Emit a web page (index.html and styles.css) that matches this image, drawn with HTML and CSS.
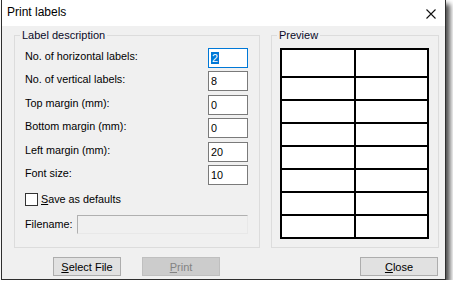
FILE: index.html
```html
<!DOCTYPE html>
<html lang="en">
<head>
    <meta charset="UTF-8">
    <title>Print labels</title>
    <link rel="stylesheet" href="styles.css">
</head>
<body>
    <div class="window">
        <div class="titlebar">
            <span class="title">Print labels</span>
            <svg class="close-x" width="10" height="10" viewBox="0 0 10 10">
                <path d="M0.5 0.5 L9.5 9.5 M9.5 0.5 L0.5 9.5" stroke="#111" stroke-width="1.1" fill="none"/>
            </svg>
        </div>

        <div class="content">
            <div class="groups">
                <fieldset class="group group-desc">
                    <legend>Label description</legend>
                    <div class="desc-inner">
                        <div class="fields">
                            <span class="lbl">No. of horizontal labels:</span>
                            <div class="textbox focused"><span class="sel">2</span></div>

                            <span class="lbl">No. of vertical labels:</span>
                            <div class="textbox">8</div>

                            <span class="lbl">Top margin (mm):</span>
                            <div class="textbox">0</div>

                            <span class="lbl">Bottom margin (mm):</span>
                            <div class="textbox">0</div>

                            <span class="lbl">Left margin (mm):</span>
                            <div class="textbox">20</div>

                            <span class="lbl">Font size:</span>
                            <div class="textbox">10</div>
                        </div>

                        <div class="check-row">
                            <span class="checkbox"></span>
                            <span><u>S</u>ave as defaults</span>
                        </div>

                        <div class="file-row">
                            <span class="lbl-file">Filename:</span>
                            <div class="textbox disabled"></div>
                        </div>
                    </div>
                </fieldset>

                <fieldset class="group group-preview">
                    <legend>Preview</legend>
                    <div class="preview-inner">
                        <div class="sheet">
                            <div></div><div></div>
                            <div></div><div></div>
                            <div></div><div></div>
                            <div></div><div></div>
                            <div></div><div></div>
                            <div></div><div></div>
                            <div></div><div></div>
                            <div></div><div></div>
                        </div>
                    </div>
                </fieldset>
            </div>

            <div class="buttons">
                <button class="btn btn-select"><u>S</u>elect File</button>
                <button class="btn btn-print" disabled><u>P</u>rint</button>
                <button class="btn btn-close"><u>C</u>lose</button>
            </div>
        </div>
    </div>
</body>
</html>
```

FILE: styles.css
```css
html, body {
    margin: 0;
    padding: 0;
    background: #fff;
}
body {
    font-family: "Liberation Sans", Arial, sans-serif;
    font-size: 10.8px;
    line-height: 13px;
    color: #000;
}
.window {
    margin-left: 1px;
    width: 445px;
    height: 280px;
    box-sizing: border-box;
    border: 1px solid #2e2e2e;
    border-top: none;
    background: #f0f0f0;
    box-shadow: 4px 4px 5px rgba(0, 0, 0, 0.7);
    display: flex;
    flex-direction: column;
}
.titlebar {
    height: 26px;
    background: #fff;
    display: flex;
    align-items: center;
    padding: 0 9px 0 5px;
}
.title {
    font-size: 12px;
    flex: 1;
    padding-bottom: 1px;
}
.close-x {
    margin-top: 2px;
}
.content {
    padding: 3px 6px 0 12px;
}
.groups {
    display: flex;
    gap: 11px;
    height: 219px;
}
.group {
    margin: 0;
    padding: 0;
    min-width: 0;
    border: 1px solid #dcdcdc;
}
.group legend {
    margin-left: 5px;
    padding: 0 2px;
    line-height: 13px;
    font-size: 11px;
    color: #0a0a28;
}
.group-desc {
    width: 246px;
    box-sizing: border-box;
}
.group-preview {
    width: 168px;
    box-sizing: border-box;
}
.desc-inner {
    padding: 6px 11px 0 10px;
}
.fields {
    display: grid;
    grid-template-columns: 1fr 40px;
    grid-auto-rows: 20px;
    row-gap: 3.4px;
}
.lbl {
    padding-top: 2px;
}
.textbox {
    box-sizing: border-box;
    height: 20px;
    background: #fff;
    border: 1px solid #7a7a7a;
    padding: 0 2px;
    line-height: 18px;
}
.textbox.focused {
    border-color: #0078d7;
}
.sel {
    background: #0078d7;
    color: #fff;
    padding: 0 1px;
}
.check-row {
    display: flex;
    align-items: center;
    gap: 3px;
    margin-top: 8px;
    height: 13px;
}
.checkbox {
    width: 11px;
    height: 11px;
    background: #fff;
    border: 1px solid #333;
}
.file-row {
    display: flex;
    align-items: center;
    margin-top: 9px;
}
.lbl-file {
    width: 52px;
}
.textbox.disabled {
    flex: 1;
    height: 19px;
    background: #f0f0f0;
    border-color: #b0b0b0 #e8e8e8 #e8e8e8 #b0b0b0;
}
.preview-inner {
    padding: 6px 9px 0 8px;
}
.sheet {
    display: grid;
    grid-template-columns: 1fr 1fr;
    grid-template-rows: 26px repeat(7, 21px);
    gap: 2px;
    padding: 2px;
    background: #000;
}
.sheet div {
    background: #fff;
}
.buttons {
    display: flex;
    margin-top: 9px;
    padding: 0 1px 0 39px;
}
.btn {
    font-family: "Liberation Sans", Arial, sans-serif;
    font-size: 11px;
    height: 19px;
    padding: 0;
    background: #e1e1e1;
    border: 1px solid #adadad;
    color: #000;
}
.btn-select {
    width: 68px;
}
.btn-print {
    width: 78px;
    margin-left: 21px;
    background: #cccccc;
    border-color: #bfbfbf;
    color: #838383;
}
.btn-close {
    width: 78px;
    margin-left: auto;
}
```
